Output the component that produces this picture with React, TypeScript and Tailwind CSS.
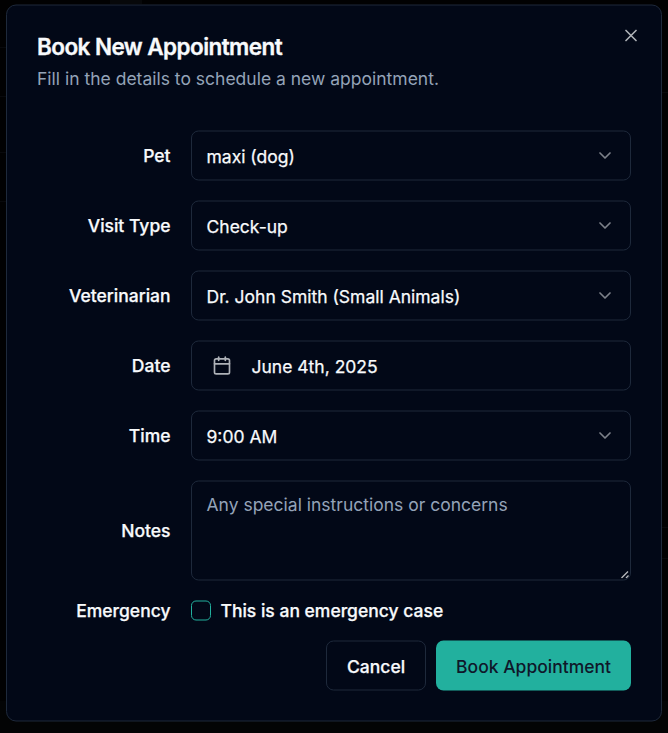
import React from "react";
import { Calendar, ChevronDown, X } from "lucide-react";

const label = "text-right text-[17.5px] leading-[17.5px] font-medium [-webkit-text-stroke:0.25px_currentColor]";
const field =
  "col-span-3 flex h-[50px] w-full items-center rounded-[7.5px] border border-[#1e293b] text-[17.5px] leading-[25px] font-normal [-webkit-text-stroke:0.25px_currentColor]";

const leftRules = "h-px w-1.5 bg-[#08090c]";

function SelectRow({ name, value }: { name: string; value: string }) {
  return (
    <div className="grid grid-cols-4 items-center gap-5">
      <label className={label}>{name}</label>
      <button type="button" className={field + " justify-between px-[15px]"}>
        <span className="pt-px">{value}</span>
        <ChevronDown className="size-5 opacity-50" />
      </button>
    </div>
  );
}

export default function App() {
  return (
    <div className="relative h-[733px] w-[668px] overflow-hidden bg-[#010102] pt-1 pl-1.5 font-['Inter',sans-serif] text-[#f8fafc]">
      <div className="absolute bottom-0 left-0 h-8 w-full bg-[#030405]" />
      <div className="absolute top-0 left-[110px] h-1 w-8 bg-[#07080a]" />
      <div className={"absolute top-[47px] left-0 " + leftRules} />
      <div className={"absolute top-[96px] left-0 " + leftRules} />
      <div className={"absolute top-[152px] left-0 " + leftRules} />
      <div className={"absolute top-[201px] left-0 " + leftRules} />
      <div className={"absolute top-[92px] right-0 " + leftRules} />
      <div className={"absolute top-[527px] right-0 " + leftRules} />
      <div className={"absolute top-[558px] right-0 " + leftRules} />
      <div
        role="dialog"
        className="relative flex h-[717px] w-[656px] translate-y-[0.5px] flex-col gap-5 rounded-[10px] border border-[#1e293b] bg-[#020817] p-[30px]"
      >
        <div className="flex flex-col gap-[7.5px]">
          <h2 className="text-[22.5px] leading-[22.5px] font-semibold tracking-[-0.025em] [-webkit-text-stroke:0.35px_currentColor]">
            Book New Appointment
          </h2>
          <p className="text-[17.5px] leading-[25px] text-[#94a3b8]">
            Fill in the details to schedule a new appointment.
          </p>
        </div>
        <div className="flex flex-col gap-5 pt-5">
          <SelectRow name="Pet" value="maxi (dog)" />
          <SelectRow name="Visit Type" value="Check-up" />
          <SelectRow name="Veterinarian" value="Dr. John Smith (Small Animals)" />
          <div className="grid grid-cols-4 items-center gap-5">
            <label className={label}>Date</label>
            <button type="button" className={field + " px-5"}>
              <Calendar className="mr-5 size-5 opacity-70" />
              <span className="pt-px">June 4th, 2025</span>
            </button>
          </div>
          <SelectRow name="Time" value="9:00 AM" />
          <div className="grid grid-cols-4 items-center gap-5">
            <label className={label}>Notes</label>
            <div className="relative col-span-3">
              <textarea
                className="block h-[100px] w-full resize-none rounded-[7.5px] border border-[#1e293b] bg-[#020817] px-[15px] py-2.5 text-[17.5px] leading-[25px] placeholder:text-[#94a3b8]"
                placeholder="Any special instructions or concerns"
              />
              <svg className="absolute right-[2px] bottom-[2px]" width="8" height="8" viewBox="0 0 8 8" fill="none" stroke="#b4b6ba" strokeWidth="1.4">
                <path d="M0.5 7.5 7 1M5 7.5 7.5 5" />
              </svg>
            </div>
          </div>
          <div className="grid h-5 grid-cols-4 items-center gap-5">
            <label className={label}>Emergency</label>
            <div className="col-span-3 flex items-center gap-2.5">
              <span role="checkbox" aria-checked="false" className="size-5 rounded-[5px] border border-[#22b09e]" />
              <label className="text-[17.5px] leading-[17.5px] font-medium [-webkit-text-stroke:0.25px_currentColor]">
                This is an emergency case
              </label>
            </div>
          </div>
        </div>
        <div className="flex justify-end gap-2.5">
          <button
            type="button"
            className="h-[50px] rounded-[7.5px] border border-[#1e293b] px-5 text-[17.5px] leading-[25px] font-medium [-webkit-text-stroke:0.25px_currentColor]"
          >
            Cancel
          </button>
          <button type="button" className="h-[50px] rounded-[7.5px] bg-[#22b09e] px-5 text-[17.5px] leading-[25px] font-medium text-[#0f172a]">
            Book Appointment
          </button>
        </div>
        <button type="button" aria-label="Close" className="absolute top-5 right-5 opacity-70">
          <X className="size-5" />
        </button>
      </div>
    </div>
  );
}
